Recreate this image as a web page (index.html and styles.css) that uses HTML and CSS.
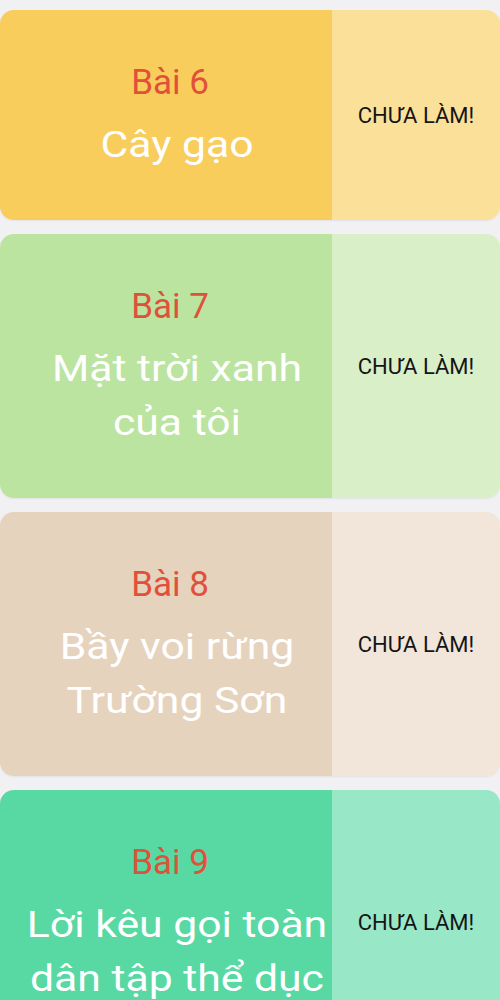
FILE: index.html
```html
<!DOCTYPE html>
<html lang="vi">
<head>
<meta charset="utf-8">
<title>Bài học</title>
<link rel="stylesheet" href="styles.css">
</head>
<body>
<main class="list">
  <article class="card card-yellow">
    <div class="lesson">
      <div class="num">Bài 6</div>
      <div class="title">Cây gạo</div>
    </div>
    <div class="status">CHƯA LÀM!</div>
  </article>
  <article class="card card-green">
    <div class="lesson">
      <div class="num">Bài 7</div>
      <div class="title">Mặt trời xanh của tôi</div>
    </div>
    <div class="status">CHƯA LÀM!</div>
  </article>
  <article class="card card-beige">
    <div class="lesson">
      <div class="num">Bài 8</div>
      <div class="title">Bầy voi rừng Trường Sơn</div>
    </div>
    <div class="status">CHƯA LÀM!</div>
  </article>
  <article class="card card-mint">
    <div class="lesson">
      <div class="num">Bài 9</div>
      <div class="title">Lời kêu gọi toàn dân tập thể dục</div>
    </div>
    <div class="status">CHƯA LÀM!</div>
  </article>
</main>
</body>
</html>
```

FILE: styles.css
```css
html, body {
  margin: 0;
  padding: 0;
}

body {
  background: #f1f0f3;
  font-family: Roboto, "Noto Sans", "Liberation Sans", sans-serif;
}

.list {
  display: flex;
  flex-direction: column;
  gap: 14px;
  padding-top: 10px;
}

.card {
  display: flex;
  border-radius: 14px;
  overflow: hidden;
  box-shadow: 0 1px 2px rgba(0, 0, 0, 0.06);
}

.lesson {
  flex: none;
  width: 332px;
  box-sizing: border-box;
  padding: 52px 0 48px 22px;
  text-align: center;
}

.num {
  font-size: 35px;
  line-height: 41px;
  color: #e0503a;
  margin: 0 14px 15px 0;
}

/* horizontally stretched title text (like Android textScaleX) */
.title {
  width: 270px;
  margin: 0 auto;
  font-size: 36.5px;
  line-height: 54px;
  color: #ffffff;
  transform: scaleX(1.17);
}

.status {
  flex: 1;
  display: flex;
  align-items: center;
  justify-content: center;
  font-size: 22px;
  color: #151515;
}

.card-yellow .lesson { background: #f9cd5c; }
.card-yellow .status { background: #fbe09a; }

.card-green .lesson { background: #bae4a0; }
.card-green .status { background: #d8efc7; }

.card-beige .lesson { background: #e6d3bd; }
.card-beige .status { background: #f2e5d9; }

.card-mint .lesson { background: #58d8a3; }
.card-mint .status { background: #98e8c7; }
```
